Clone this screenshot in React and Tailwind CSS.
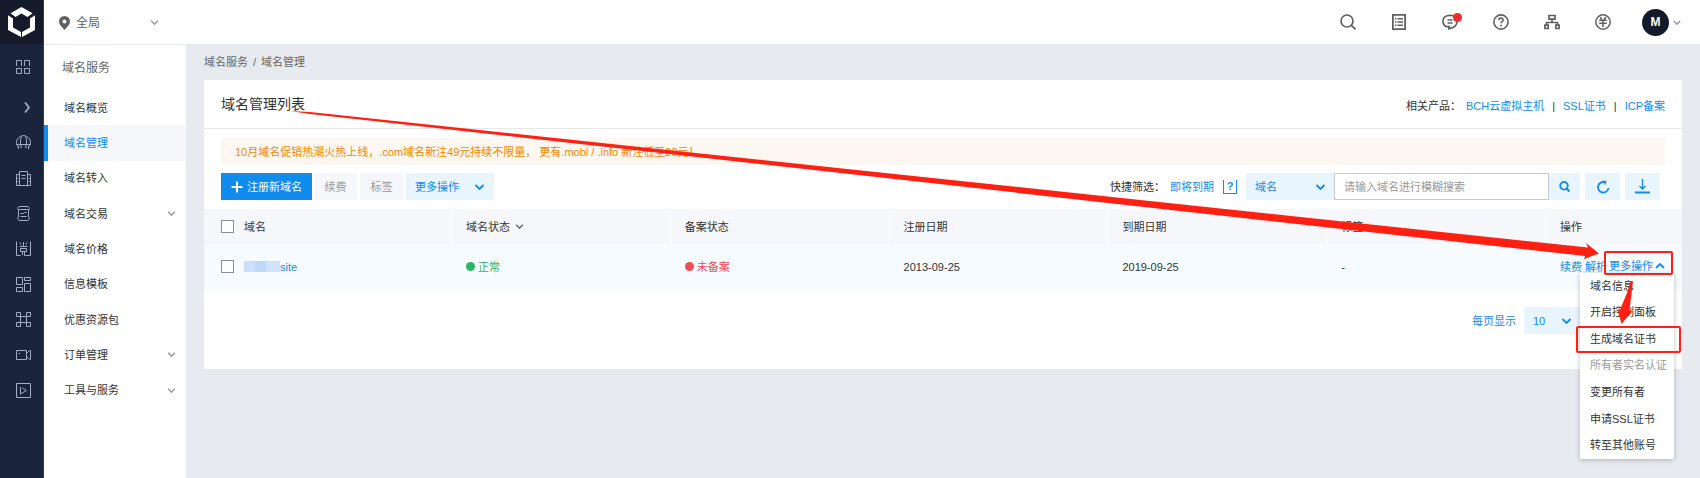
import React, { useState } from 'react';

const sideItems = [
  { name: '域名概览' },
  { name: '域名管理', active: true },
  { name: '域名转入' },
  { name: '域名交易', more: true },
  { name: '域名价格' },
  { name: '信息模板' },
  { name: '优惠资源包' },
  { name: '订单管理', more: true },
  { name: '工具与服务', more: true },
];

const menuItems = [
  { name: '域名信息' },
  { name: '开启控制面板' },
  { name: '生成域名证书', marked: true },
  { name: '所有者实名认证', disabled: true },
  { name: '变更所有者' },
  { name: '申请SSL证书' },
  { name: '转至其他账号' },
];

// 15px line icons of the dark rail
const railIcons = [
  { name: '展开', d: 'M9 2.500l4 5l-4 5', bold: true },
  { name: '域名', d: 'M4.500 1.500C2 2.500 .5 5 .5 7.500c0 2 .8 3.500 2 5M10.500 1.500c2.500 1 4 3.500 4 6c0 2-.8 3.500-2 5M4.500 1.500C6 .3 9 .3 10.500 1.500M5.500 1.500C4 5 4 9 5.500 12.500M9.500 1.500c1.500 3.500 1.500 7.500 0 11M.5 9.500h14M2.500 11v3M12.500 11v3M4.500 12.500h1M9.500 12.500h1' },
  { name: '主机', d: 'M3.500 14.500V.5h8v14M.5 14.500v-11h3M11.500 3.500h3v11M.5 14.500h14M5.500 4.500h4M5.500 7.500h4M1.500 7.500h1M1.500 10.500h1M12.500 7.500h1M12.500 10.500h1' },
  { name: '存储', d: 'M3 .5h9l1.500 2l-1 1.500v7l1 1.500l-1.500 2H3l-1.500-2l1-1.500V4l-1-1.500zM2.500 3.500h10M4.500 7.500h3l1-1h2M4.500 10.500h6' },
  { name: '证书', d: 'M.5 .5v14h4M14.500 .5v14h-4M7.500 1v4M4 1.500l1 2M11 1.500l-1 2M3.500 5.500h8M4.500 7.500h6v3h-6zM6.500 10.500v3.500M8.500 10.500v4h2' },
  { name: '应用', d: 'M.5 .5h6v7h-6zM8.500 .5h6v3h-6zM.5 10.500h6v4h-6zM8.500 6.500h6v8h-6z' },
  { name: '网络', d: 'M.5 .5h4v4h-4zM10.500 .5h4v4h-4zM.5 10.500h4v4h-4zM10.500 10.500h4v4h-4zM4.500 4.500v6M10.500 4.500v6M4.500 4.500h6M4.500 10.500h6' },
  { name: '视频', d: 'M.5 3.500h10v9h-10zM2.500 6.500h1.500M10.500 6.500l3-3h1v9h-1l-3-3' },
  { name: '播放', d: 'M.5 .5h14v14h-14zM4.500 4v7M4.500 11l6-3.500l-4-2.500' },
];

const domains = [
  { id: 1, name: 'site', registered: '2013-09-25', expires: '2019-09-25' },
];

const Chevron = ({ className, up }) => (
  <svg className={className} viewBox="0 0 10 6" fill="none" stroke="currentColor" strokeWidth="1.8">
    <path d={up ? 'M1 5l4-4l4 4' : 'M1 1l4 4l4-4'} />
  </svg>
);

const Select = ({ id, label, options, className, chevronClass }) => (
  <div className={`relative h-[27px] bg-[#e8f4fe] text-[#108cee] ${className}`}>
    <select id={id} aria-label={label} className="h-full w-full appearance-none bg-transparent pl-[9px] outline-none">
      {options.map((o) => (
        <option key={o}>{o}</option>
      ))}
    </select>
    <Chevron className={`pointer-events-none absolute top-[11px] h-[6px] w-[11px] ${chevronClass}`} />
  </div>
);

const Rail = () => (
  <nav aria-label="产品" className="w-[44px] shrink-0 border-r border-[#2e3a57] bg-[#1b243d] text-[#a3adc6]">
    <a href="#home" aria-label="首页" className="flex h-[44px] items-center justify-center bg-[#141a2a]">
      <svg className="h-[30px] w-[27px]" viewBox="0 0 27 30" fill="#fff">
        <path d="M13.500 0L24.500 6.200L19.500 10L13.500 6.500L7.500 10L2.500 6.200z" />
        <path d="M0 8.300l5 3.200v9l8 4.500v5L0 23z" />
        <path d="M27 8.300l-5 3.200v9L14 25v5l13-7z" />
      </svg>
    </a>
    <a href="#all" aria-label="全部产品" className="flex h-[46px] items-center pl-[16px]">
      <svg className="h-[15px] w-[15px]" viewBox="0 0 15 15" fill="none" stroke="currentColor">
        <path d="M.5 6V.5h5V6M8.500 6V.5h5V6M.5 8.500h5v5h-5zM8.500 8.500h5v5h-5z" />
      </svg>
    </a>
    <ul className="grid h-[318px] auto-rows-fr">
      {railIcons.map((icon) => (
        <li key={icon.name}>
          <a href="#product" aria-label={icon.name} className="flex h-full items-center pl-[16px]">
            <svg
              className="h-[15px] w-[15px]"
              viewBox="0 0 15 15"
              fill="none"
              stroke="currentColor"
              strokeWidth={icon.bold ? 1.8 : 1}
            >
              <path d={icon.d} />
            </svg>
          </a>
        </li>
      ))}
    </ul>
  </nav>
);

const TopBar = () => (
  <header className="flex h-[45px] items-center justify-between border-b border-[#e7eaef] bg-white pr-[19px] pl-[15px] text-[#606060]">
    <button type="button" className="flex items-center pt-px text-[12px]">
      <svg className="mr-[6px] h-[14px] w-[11px]" viewBox="0 0 11 14" fill="currentColor" fillRule="evenodd">
        <path d="M5.500 0A5.500 5.500 0 0 0 0 5.500C0 8.500 3 11 5.500 14C8 11 11 8.500 11 5.500A5.500 5.500 0 0 0 5.500 0zM5.500 3.500a2 2 0 1 1 0 4a2 2 0 0 1 0-4z" />
      </svg>
      全局
      <Chevron className="ml-[50px] h-[5px] w-[9px] text-[#999]" />
    </button>
    <div className="flex items-center gap-[35px]">
      <button type="button" aria-label="搜索">
        <svg className="h-[16px] w-[16px]" viewBox="0 0 16 16" fill="none" stroke="currentColor" strokeWidth="1.700">
          <circle cx="7" cy="7" r="6" />
          <path d="M11.300 11.300l4.200 4" />
        </svg>
      </button>
      <button type="button" aria-label="工单">
        <svg className="h-[16px] w-[16px]" viewBox="0 0 16 16" fill="none" stroke="currentColor" strokeWidth="1.800">
          <path d="M1.900 .9h12.200v14.200H1.900z" />
          <path d="M4 4.700h1.500M4 8h1.500M4 11.300h1.500M6.500 4.700H12M6.500 8H12M6.500 11.300H12" strokeWidth="1.400" />
        </svg>
      </button>
      <button type="button" aria-label="消息" className="relative">
        <svg className="h-[16px] w-[16px]" viewBox="0 0 16 16" fill="none" stroke="currentColor" strokeWidth="1.700">
          <path d="M4.500 12.700C2.300 11.800 .9 9.700 .9 7.300C.9 3.700 3.800 1.300 8 1.300s7.100 2.500 7.100 6c0 4-2.900 6.700-8.300 7.500l.4-2.200z" />
          <path d="M5.500 6h5M5.500 9h5" strokeWidth="1.400" />
        </svg>
        <span className="absolute -top-px -right-1 h-[9px] w-[9px] rounded-full bg-[#ef2b2f]" />
      </button>
      <button type="button" aria-label="帮助">
        <svg className="h-[16px] w-[16px]" viewBox="0 0 16 16" fill="none" stroke="currentColor" strokeWidth="1.600">
          <circle cx="8" cy="8" r="7.100" />
          <path d="M5.800 6.300C5.800 3.400 10.200 3.500 10.200 6.100c0 1.600-2.200 1.600-2.200 3.200M8 10.700v1.700" />
        </svg>
      </button>
      <button type="button" aria-label="组织">
        <svg className="h-[16px] w-[16px]" viewBox="0 0 16 16" fill="none" stroke="currentColor" strokeWidth="1.700">
          <path d="M5 1.500h6v3.700H5zM.9 11.200h3.300v3.300H.9zM11.800 11.200h3.300v3.300h-3.300zM8 5.200v3.300M2.500 11V8.500h11V11" />
        </svg>
      </button>
      <button type="button" aria-label="费用">
        <svg className="h-[16px] w-[16px]" viewBox="0 0 16 16" fill="none" stroke="currentColor" strokeWidth="1.500">
          <circle cx="8" cy="8" r="7.200" />
          <path d="M5.300 3l1.500 2.500M10.700 3L9.200 5.500M4.200 6.200h7.600M4.200 9.200h7.600M8 6v7" />
        </svg>
      </button>
      <button type="button" aria-label="账户" className="-ml-1 flex items-center gap-1">
        <span className="flex h-[27px] w-[27px] items-center justify-center rounded-full bg-[#141a2a] text-[12px] font-bold text-white">
          M
        </span>
        <Chevron className="h-[5px] w-[8px] text-[#999]" />
      </button>
    </div>
  </header>
);

const Sidebar = () => (
  <aside className="w-[142px] shrink-0 bg-white text-[#333]">
    <h2 className="flex h-[45px] items-center pl-[18px] text-[12px] text-[#666]">域名服务</h2>
    <ul className="grid h-[318px] auto-rows-fr">
      {sideItems.map((item) => (
        <li key={item.name}>
          <a
            href="#side"
            className={
              item.active
                ? 'flex h-full items-center justify-between border-l-4 border-[#108cee] bg-[#f6f7fb] pr-[10px] pl-[16px] text-[#108cee]'
                : 'flex h-full items-center justify-between pr-[10px] pl-[20px]'
            }
          >
            {item.name}
            {item.more && <Chevron className="h-[5px] w-[9px] text-[#999]" />}
          </a>
        </li>
      ))}
    </ul>
  </aside>
);

const CheckBox = ({ label }) => (
  <input
    type="checkbox"
    aria-label={label}
    className="h-[13px] w-[13px] shrink-0 appearance-none border border-[#8f8f8f] bg-white checked:bg-[#108cee]"
  />
);

const RowActions = () => {
  const [open, setOpen] = useState(true);

  return (
    <div className="relative flex h-[45px] items-center text-[#108cee]">
      <a href="#renew">续费</a>
      <a href="#resolve" className="ml-[3px] w-[22px]">解析</a>
      <button
        type="button"
        onClick={() => setOpen(!open)}
        className="absolute top-[7px] right-[9px] z-20 flex h-[24px] w-[69px] items-center justify-between rounded-[2px] border-2 border-[#ff2011] pt-[6px] pr-[6px] pl-[3px] whitespace-nowrap"
      >
        更多操作
        <Chevron className="h-[6px] w-[10px]" up={open} />
      </button>
      {open && (
        <ul className="absolute top-[29px] right-[8px] z-10 grid h-[186px] w-[94px] auto-rows-fr bg-white text-[#333] shadow-[0_1px_5px_rgba(0,0,0,0.25)]">
          {menuItems.map((item) => (
            <li key={item.name} className="relative">
              <button
                type="button"
                disabled={item.disabled}
                className="h-full w-full pb-px pl-[10px] text-left whitespace-nowrap disabled:text-[#999]"
              >
                {item.name}
              </button>
              {item.marked && (
                <span className="pointer-events-none absolute inset-y-0 -right-[7px] -left-[4px] rounded-[2px] border-2 border-[#ff2011]" />
              )}
            </li>
          ))}
        </ul>
      )}
    </div>
  );
};

const DomainTable = () => (
  <table className="mt-[9px] w-full table-fixed border-separate border-spacing-0 text-left text-[#333]">
    <thead>
      <tr className="h-[35px] bg-[#f6f7fb] [&>th]:border-r [&>th]:border-white [&>th]:p-0 [&>th]:pl-[14px] [&>th]:font-normal [&>th:last-child]:border-r-0">
        <th className="w-[248px]">
          <div className="flex items-center gap-[10px] pl-[3px]">
            <CheckBox label="全选" />
            域名
          </div>
        </th>
        <th>
          <button type="button" className="flex items-center gap-[5px]">
            域名状态
            <Chevron className="h-[5px] w-[9px] text-[#666]" />
          </button>
        </th>
        <th>备案状态</th>
        <th>注册日期</th>
        <th>到期日期</th>
        <th>标签</th>
        <th className="w-[136px]">操作</th>
      </tr>
    </thead>
    <tbody>
      {domains.map((d) => (
        <tr key={d.id} className="h-[45px] bg-[#f6fbff] [&>td]:p-0 [&>td]:pl-[14px]">
          <td>
            <div className="flex items-center gap-[10px] pl-[3px]">
              <CheckBox label="选择域名" />
              <a href="#domain" className="flex items-center text-[#108cee]">
                <span className="h-[11px] w-[11px] bg-[#c9dffa]" />
                <span className="h-[11px] w-[11px] bg-[#bdd8f9]" />
                <span className="h-[11px] w-[14px] bg-[#d0e3fb]" />
                {d.name}
              </a>
            </div>
          </td>
          <td>
            <span className="flex items-center gap-[3px] text-[#2bb761]">
              <span className="h-[9px] w-[9px] rounded-full bg-[#2bb761]" />
              正常
            </span>
          </td>
          <td>
            <span className="flex items-center gap-[3px] text-[#ee4e4f]">
              <span className="h-[9px] w-[9px] rounded-full bg-[#ee4e4f]" />
              未备案
            </span>
          </td>
          <td>{d.registered}</td>
          <td>{d.expires}</td>
          <td>-</td>
          <td>
            <RowActions />
          </td>
        </tr>
      ))}
    </tbody>
  </table>
);

const Toolbar = () => (
  <div className="mt-2 flex items-center justify-between pr-[22px] pl-[17px]">
    <div className="flex items-center">
      <button type="button" className="flex h-[27px] w-[91px] items-center justify-center gap-[4px] bg-[#108cee] text-white">
        <svg className="h-[12px] w-[12px]" viewBox="0 0 12 12" stroke="currentColor" strokeWidth="2">
          <path d="M6 .5v11M.5 6h11" />
        </svg>
        注册新域名
      </button>
      <button type="button" disabled className="ml-[2px] h-[27px] w-[43px] bg-[#f6f7fb] text-[#999]">续费</button>
      <button type="button" disabled className="ml-[3px] h-[27px] w-[43px] bg-[#f6f7fb] text-[#999]">标签</button>
      <button type="button" className="ml-[3px] flex h-[27px] w-[88px] items-center justify-between bg-[#e8f4fe] px-[9px] text-[#108cee]">
        更多操作
        <Chevron className="h-[6px] w-[11px]" />
      </button>
    </div>
    <div className="flex items-center">
      <span className="text-[#333]">快捷筛选：</span>
      <a href="#expiring" className="ml-[5px] text-[#108cee]">即将到期</a>
      <button type="button" aria-label="说明" className="ml-[9px] flex h-[14px] w-[14px] items-center justify-center border border-t-0 border-[#108cee] leading-none font-bold text-[#108cee]">
        ?
      </button>
      <Select id="field" label="搜索字段" options={['域名']} className="ml-[9px] w-[88px]" chevronClass="right-[8px]" />
      <input
        type="text"
        aria-label="搜索域名"
        placeholder="请输入域名进行模糊搜索"
        className="h-[27px] w-[215px] border border-[#c8c8c8] bg-white px-[9px] outline-none placeholder:text-[#999]"
      />
      <button type="button" aria-label="搜索" className="flex h-[27px] w-[31px] items-center justify-center bg-[#e8f4fe] text-[#108cee]">
        <svg className="h-[11px] w-[11px]" viewBox="0 0 11 11" fill="none" stroke="currentColor" strokeWidth="1.800">
          <circle cx="5" cy="4.800" r="3.800" />
          <path d="M7.500 7.500l3 3" strokeWidth="2.200" />
        </svg>
      </button>
      <button type="button" aria-label="刷新" className="ml-[5px] flex h-[27px] w-[35px] items-center justify-center bg-[#e8f4fe] text-[#108cee]">
        <svg className="h-[14px] w-[14px]" viewBox="0 0 14 14" fill="none" stroke="currentColor" strokeWidth="1.800">
          <path d="M9 2.300A5.300 5.300 0 1 0 12.500 8" />
          <path d="M6.500 1.200L9.700 1.500L9 4.500" strokeWidth="1.300" />
        </svg>
      </button>
      <button type="button" aria-label="下载" className="ml-[5px] flex h-[27px] w-[35px] items-center justify-center bg-[#e8f4fe] text-[#108cee]">
        <svg className="h-[15px] w-[15px]" viewBox="0 0 15 15" fill="none" stroke="currentColor" strokeWidth="1.300">
          <path d="M7.500 0v10M4.500 7l3 3l3-3" />
          <path d="M0 13.500h15" strokeWidth="2" />
        </svg>
      </button>
    </div>
  </div>
);

// Hand-drawn red arrows that lead through the steps
const Arrows = () => (
  <>
    <div className="pointer-events-none absolute top-[111px] right-[101px] left-[290px] z-30 h-[148px]">
      <svg className="h-full w-full" viewBox="0 0 1309 148" preserveAspectRatio="none" fill="#ff2011">
        <path d="M0 0L20 1L1298 136.500l-2-4.500l13 10.500l-15 5.500l1-3L20 3z" />
      </svg>
    </div>
    <div className="pointer-events-none absolute top-[281px] right-[67px] z-30 h-[43px] w-[15px]">
      <svg className="h-full w-full" viewBox="0 0 15 43" fill="#ff2011">
        <path d="M12.500 0H15L11.500 29l2.500 1.500L3.500 43L0 29.500l2.500-2L9 12z" />
      </svg>
    </div>
  </>
);

const App = () => {
  return (
    <div className="relative flex min-h-screen bg-[#e7eaef] font-['Liberation_Sans','Noto_Sans_CJK_SC',sans-serif] text-[11px] leading-[16px]">
      <Rail />
      <div className="flex min-w-0 flex-1 flex-col">
        <TopBar />
        <div className="flex flex-1">
          <Sidebar />
          <main className="min-w-0 flex-1 pr-[18px] pl-[18px]">
            <nav aria-label="面包屑" className="flex h-[33px] items-center gap-[5px] text-[#666]">
              <a href="#service">域名服务</a>
              <span>/</span>
              <span>域名管理</span>
            </nav>
            <section className="mt-[2px] bg-white pb-[35px]">
              <div className="flex h-[49px] items-center justify-between border-b border-[#e7e7e7] px-[17px]">
                <h1 className="text-[14px] text-[#333]">域名管理列表</h1>
                <div className="flex items-center pt-[3px] text-[#333]">
                  <span className="mr-[5px]">相关产品：</span>
                  <a href="#bch" className="text-[#108cee]">BCH云虚拟主机</a>
                  <span className="mx-[8px]">|</span>
                  <a href="#ssl" className="text-[#108cee]">SSL证书</a>
                  <span className="mx-[8px]">|</span>
                  <a href="#icp" className="text-[#108cee]">ICP备案</a>
                </div>
              </div>
              <p className="mx-[17px] mt-[9px] flex h-[27px] items-center rounded-[2px] bg-[#fcf7f1] pl-[14px] text-[#f38900]">
                10月域名促销热潮火热上线，.com域名新注49元持续不限量， 更有.mobi / .info 新注低至28元！
              </p>
              <Toolbar />
              <DomainTable />
              <div className="mt-[18px] flex items-center justify-end pr-[102px]">
                <label htmlFor="size" className="text-[#108cee]">每页显示</label>
                <Select id="size" label="每页显示" options={['10', '20', '50']} className="ml-[8px] w-[56px]" chevronClass="right-[8px]" />
              </div>
            </section>
          </main>
        </div>
      </div>
      <Arrows />
    </div>
  );
};

export default App;
